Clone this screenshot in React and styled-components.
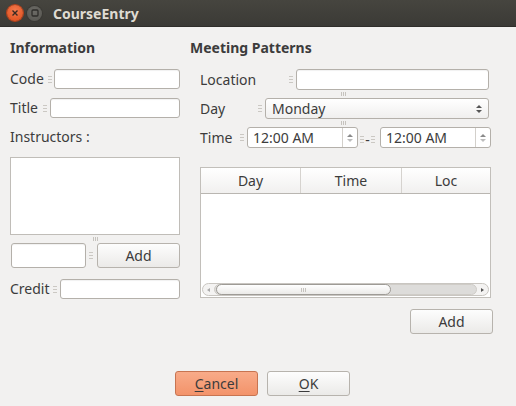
import React from 'react'
import styled, { createGlobalStyle } from 'styled-components'

const Global = createGlobalStyle`
  body {
    margin: 0;
    background: #f2f1f0;
    font-family: "Noto Sans", "DejaVu Sans", sans-serif;
    color: #3c3c3c;
  }
`;

const Win = styled.div`
  width: 516px;
  height: 406px;
  display: flex;
  flex-direction: column;
  background: #f2f1f0;
  overflow: hidden;
`;

const TitleBar = styled.div`
  height: 27px;
  flex: none;
  display: flex;
  align-items: center;
  padding-left: 7px;
  background: linear-gradient(#46453f, #3b3a36);
  border-bottom: 1px solid #2f2e2b;
  box-sizing: border-box;
`;

const WinBtn = styled.div`
  width: ${p => p.$size}px;
  height: ${p => p.$size}px;
  border-radius: 50%;
  margin-right: ${p => p.$gap}px;
  display: flex;
  align-items: center;
  justify-content: center;
  background: ${p => p.$close
    ? 'radial-gradient(circle at 50% 35%, #f27a4f, #df4a16)'
    : 'radial-gradient(circle at 50% 35%, #6c6b66, #55544f)'};
  box-shadow: 0 0 0 1px ${p => p.$close ? '#b5401a' : '#3a3935'};
`;

const WinTitle = styled.div`
  color: #dfdbd2;
  font-weight: bold;
  font-size: 14px;
  margin-left: 11px;
`;

const Body = styled.div`
  flex: 1;
  display: flex;
  flex-direction: column;
`;

const Main = styled.div`
  display: flex;
`;

const Column = styled.div`
  width: ${p => p.$w}px;
  margin-left: ${p => p.$left}px;
  display: flex;
  flex-direction: column;
`;

const Heading = styled.div`
  font-weight: bold;
  font-size: 14px;
  line-height: 19px;
  height: 19px;
  margin-top: 11px;
  color: #3c3c3c;
`;

const FieldRow = styled.div`
  display: grid;
  grid-template-columns: ${p => p.$label}px 1fr;
  align-items: center;
  height: ${p => p.$h || 20}px;
  margin-top: ${p => p.$top}px;
  margin-right: ${p => p.$right || 0}px;
  padding-left: ${p => p.$pad || 0}px;
`;

const Label = styled.div`
  font-size: 14px;
  line-height: 20px;
  height: 100%;
  display: flex;
  align-items: center;
  justify-content: space-between;
`;

const HGrip = styled.span`
  display: inline-block;
  width: 4px;
  height: 7px;
  margin-right: ${p => p.$mr || 3}px;
  margin-left: ${p => p.$ml || 0}px;
  background: repeating-linear-gradient(#cbc8c3 0 1px, transparent 1px 3px);
  flex: none;
`;

const VGripRow = styled.div`
  height: ${p => p.$h}px;
  display: flex;
  align-items: center;
  justify-content: ${p => p.$at ? 'flex-start' : 'center'};
  padding-left: ${p => p.$at || 0}px;
`;

const VGrip = styled.span`
  width: 5px;
  height: 4px;
  background: repeating-linear-gradient(90deg, #c6c3be 0 1px, transparent 1px 2px);
`;

const Input = styled.div`
  height: ${p => p.$h || 20}px;
  width: ${p => p.$w ? `${p.$w}px` : 'auto'};
  box-sizing: border-box;
  background: #fff;
  border: 1px solid #b4b0aa;
  border-radius: 3px;
  box-shadow: inset 0 1px 1px rgba(0,0,0,0.06);
`;

const SubLabel = styled.div`
  font-size: 14px;
  line-height: 20px;
  margin-top: 9px;
`;

const ListBox = styled.div`
  height: 78px;
  margin-top: 10px;
  box-sizing: border-box;
  background: #fff;
  border: 1px solid #c0bdb8;
`;

const Btn = styled.div`
  width: ${p => p.$w || 83}px;
  height: 25px;
  box-sizing: border-box;
  border: 1px solid ${p => p.$accent ? '#c77451' : '#b7b3ad'};
  border-radius: 3px;
  background: ${p => p.$accent
    ? 'linear-gradient(#f8ab89, #f3936a)'
    : 'linear-gradient(#fdfdfd, #ebeae8)'};
  display: flex;
  align-items: center;
  justify-content: center;
  font-size: 14px;
  color: #3c3c3c;
  flex: none;
  u { text-decoration-thickness: 1px; text-underline-offset: 2px; }
`;

const AddRow = styled.div`
  display: flex;
  align-items: center;
  height: 25px;
  padding-left: 1px;
`;

const Combo = styled.div`
  height: 21px;
  box-sizing: border-box;
  border: 1px solid #b4b0aa;
  border-radius: 3px;
  background: linear-gradient(#ffffff, #f0efee);
  display: flex;
  align-items: center;
  justify-content: space-between;
  padding: 0 5px 0 6px;
  font-size: 14px;
`;

const Arrows = styled.div`
  display: flex;
  flex-direction: column;
  align-items: center;
  gap: 2px;
  width: ${p => p.$w || 8}px;
  align-self: stretch;
  justify-content: center;
  border-left: ${p => p.$line ? '1px solid #d3d0cb' : 'none'};
  box-sizing: border-box;
`;

const Tri = styled.span`
  width: 0;
  height: 0;
  border-left: 3px solid transparent;
  border-right: 3px solid transparent;
  ${p => p.$down
    ? `border-top: 3px solid ${p.$c || '#707070'};`
    : `border-bottom: 3px solid ${p.$c || '#707070'};`}
`;

const TimeRow = styled.div`
  display: flex;
  align-items: center;
  height: 21px;
  padding-left: 10px;
`;

const TimeLabel = styled.div`
  width: 47px;
  font-size: 14px;
  display: flex;
  align-items: center;
  justify-content: space-between;
`;

const Spin = styled.div`
  width: 111px;
  height: 21px;
  box-sizing: border-box;
  border: 1px solid #b4b0aa;
  border-radius: 3px;
  background: #fff;
  display: flex;
  align-items: center;
  font-size: 14px;
  padding-left: 5px;
  span.val { flex: 1; }
`;

const Dash = styled.div`
  width: 22px;
  display: flex;
  align-items: center;
  justify-content: center;
  font-size: 14px;
  padding-top: 4px;
`;

const Table = styled.div`
  margin: 19px 0 0 10px;
  width: 291px;
  height: 131px;
  box-sizing: border-box;
  border: 1px solid #c2bfba;
  background: #fff;
  display: flex;
  flex-direction: column;
`;

const THead = styled.div`
  display: grid;
  grid-template-columns: 100px 101px 1fr;
  height: 25px;
  border-bottom: 1px solid #b9b6b1;
  background: linear-gradient(#ffffff, #f1f0ef);
  flex: none;
`;

const Th = styled.div`
  display: flex;
  align-items: center;
  justify-content: center;
  font-size: 14px;
  border-right: ${p => p.$last ? 'none' : '1px solid #d6d3cf'};
`;

const TBody = styled.div`
  flex: 1;
`;

const HScroll = styled.div`
  height: 13px;
  margin: 0 1px 1px 1px;
  box-sizing: border-box;
  border: 1px solid #c9c6c1;
  border-radius: 7px;
  background: #f4f3f2;
  display: flex;
  align-items: center;
`;

const ScrollArrow = styled.div`
  width: 11px;
  display: flex;
  align-items: center;
  justify-content: center;
  span {
    width: 0;
    height: 0;
    border-top: 2.5px solid transparent;
    border-bottom: 2.5px solid transparent;
    ${p => p.$right ? 'border-left: 3px solid #555;' : 'border-right: 3px solid #aaa;'}
  }
`;

const Trough = styled.div`
  flex: 1;
  height: 11px;
  border-radius: 6px;
  background: #dddcda;
  display: flex;
  box-sizing: border-box;
  border: 1px solid #cfccc7;
`;

const Thumb = styled.div`
  width: 175px;
  margin-left: 1px;
  box-sizing: border-box;
  border: 1px solid #9e9b96;
  border-radius: 6px;
  background: linear-gradient(#ffffff, #ebeae8);
  display: flex;
  align-items: center;
  justify-content: center;
  margin-top: -1px;
  height: 11px;
`;

const RightBtnRow = styled.div`
  display: flex;
  justify-content: flex-end;
  margin-top: 11px;
`;

const Footer = styled.div`
  margin-top: auto;
  margin-bottom: 10px;
  display: flex;
  justify-content: center;
  gap: 9px;
  padding-left: 9px;
`;

export default function App() {
  return (
    <>
      <Global />
      <Win>
        <TitleBar>
          <WinBtn $close $size={16} $gap={4}>
            <svg width="8" height="8" viewBox="0 0 8 8">
              <path d="M1.5 1.5 L6.5 6.5 M6.5 1.5 L1.5 6.5" stroke="#3a2a22" strokeWidth="1.4" />
            </svg>
          </WinBtn>
          <WinBtn $size={15} $gap={0}>
            <svg width="8" height="8" viewBox="0 0 8 8">
              <rect x="1" y="1" width="6" height="6" rx="1" fill="none" stroke="#2e2d2a" strokeWidth="1.3" />
            </svg>
          </WinBtn>
          <WinTitle>CourseEntry</WinTitle>
        </TitleBar>
        <Body>
          <Main>
            <Column $w={170} $left={10}>
              <Heading>Information</Heading>
              <FieldRow $label={44} $top={12}>
                <Label>Code<HGrip $mr={2} /></Label>
                <Input />
              </FieldRow>
              <FieldRow $label={40} $top={9}>
                <Label>Title<HGrip $mr={3} /></Label>
                <Input />
              </FieldRow>
              <SubLabel>Instructors :</SubLabel>
              <ListBox />
              <VGripRow $h={8}><VGrip /></VGripRow>
              <AddRow>
                <Input $w={78} $h={25} />
                <HGrip $ml={3} $mr={4} />
                <Btn>Add</Btn>
              </AddRow>
              <FieldRow $label={50} $top={11}>
                <Label>Credit<HGrip $mr={0} /></Label>
                <Input />
              </FieldRow>
            </Column>
            <Column $w={303} $left={10}>
              <Heading>Meeting Patterns</Heading>
              <FieldRow $label={96} $top={12} $h={21} $pad={10} $right={4}>
                <Label>Location<HGrip $mr={3} /></Label>
                <Input $h={21} />
              </FieldRow>
              <VGripRow $h={8} $at={151}><VGrip /></VGripRow>
              <FieldRow $label={65} $top={0} $h={21} $pad={10} $right={4}>
                <Label>Day<HGrip $mr={3} /></Label>
                <Combo>
                  Monday
                  <Arrows>
                    <Tri $c="#555" />
                    <Tri $down $c="#555" />
                  </Arrows>
                </Combo>
              </FieldRow>
              <VGripRow $h={8} $at={151}><VGrip /></VGripRow>
              <TimeRow>
                <TimeLabel>Time<HGrip $mr={3} /></TimeLabel>
                <Spin>
                  <span className="val">12:00 AM</span>
                  <Arrows $w={15} $line>
                    <Tri $c="#8a8a8a" />
                    <Tri $down $c="#bdbdbd" />
                  </Arrows>
                </Spin>
                <Dash><HGrip $mr={1} />-<HGrip $ml={1} $mr={0} /></Dash>
                <Spin>
                  <span className="val">12:00 AM</span>
                  <Arrows $w={15} $line>
                    <Tri $c="#8a8a8a" />
                    <Tri $down $c="#bdbdbd" />
                  </Arrows>
                </Spin>
              </TimeRow>
              <Table>
                <THead>
                  <Th>Day</Th>
                  <Th>Time</Th>
                  <Th $last>Loc</Th>
                </THead>
                <TBody />
                <HScroll>
                  <ScrollArrow><span /></ScrollArrow>
                  <Trough>
                    <Thumb><VGrip /></Thumb>
                  </Trough>
                  <ScrollArrow $right><span /></ScrollArrow>
                </HScroll>
              </Table>
              <RightBtnRow>
                <Btn>Add</Btn>
              </RightBtnRow>
            </Column>
          </Main>
          <Footer>
            <Btn $accent><span><u>C</u>ancel</span></Btn>
            <Btn><span><u>O</u>K</span></Btn>
          </Footer>
        </Body>
      </Win>
    </>
  )
}
